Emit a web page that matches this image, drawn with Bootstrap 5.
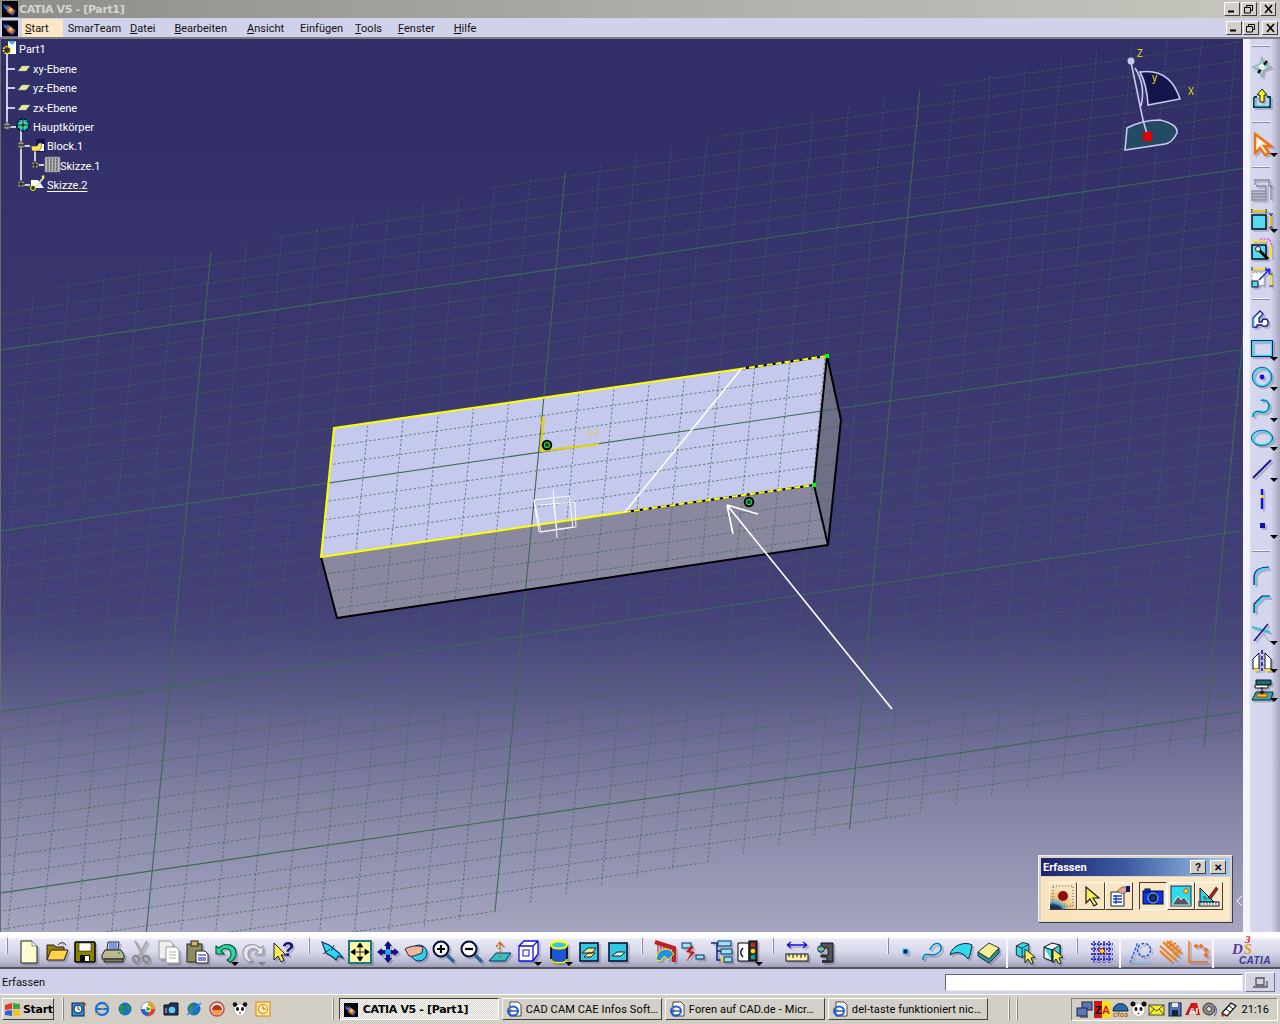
<!DOCTYPE html>
<html lang="de">
<head>
<meta charset="utf-8">
<title>CATIA V5 - [Part1]</title>
<link href="https://cdn.jsdelivr.net/npm/bootstrap@5.3.0/dist/css/bootstrap.min.css" rel="stylesheet">
<style>
html,body{margin:0;padding:0;width:1280px;height:1024px;overflow:hidden}
body{font:11px/1 Roboto,"Liberation Sans",sans-serif;color:#000;background:#d4d0c8}
svg{display:block;overflow:visible}
.app{width:1280px;height:1024px}
.wtitle{height:18px;background:linear-gradient(90deg,#8d8d8a,#b0b0aa 55%,#c6c6bf);padding:0 2px;color:#d6d6ce;font:bold 11px "DejaVu Sans",sans-serif}
.wtitle .ttxt{margin-left:1px;letter-spacing:-.35px}
.mbar{height:21px;background:#d0d2ea;border-bottom:2px solid #7e7e80;padding:1px 0 0 2px;color:#111}
.mstart{background:#fbe7c6;height:18px;padding:0 14px 0 3px;margin-left:4px;margin-right:5px}
.mg9{margin-right:9px}.mg12{margin-right:12px}.mg16{margin-right:16px}.mg19{margin-right:19px}.mg20{margin-right:20px}
.wbtns{margin-left:auto;margin-right:2px;gap:1px}
.wb{width:16px;height:14px;background:#d4d0c8;border:1px solid;border-color:#fff #404040 #404040 #fff;display:flex;align-items:center;justify-content:center}
.wb+.wb+.wb{margin-left:2px;width:16px}
.mainrow{height:893px}
.vp{width:1243px;height:893px;background:repeating-conic-gradient(rgba(0,0,50,.07) 0 25%,transparent 0 50%) 0 0/2px 2px,linear-gradient(180deg,#322f69 0,#3b3970 33%,#45437a 63%,#4b4a7d 67%,#5c5c89 73%,#72729a 79%,#8a8aa8 86%,#9a9ab8 93%,#acacc6 100%);overflow:hidden;border-left:1px solid #6a6a70}
.scene{position:absolute;left:-1px;top:0}
.treebox{position:absolute;left:-1px;top:0;width:120px;color:#fff}
.tr{height:19.5px;display:flex;align-items:center}
.trt{height:20.5px}.trs{height:18.5px}
.tr0{padding-left:19px}.tr1{padding-left:33px}.tr2{padding-left:47px}.tr3{padding-left:60px}
.tree-u{text-decoration:underline;text-underline-offset:2px}
.rbar{width:37px;background:linear-gradient(90deg,#f4f4fa 0,#f4f4fa 6px,#d4d6ee 8px,#d4d6ee 28px,#a4a4bc 37px)}
.rhand{height:2px;width:18px;margin-left:9px;background:#f4f4f8;border-bottom:1px solid #8c8c98}
.rs{display:flex;align-items:center;justify-content:flex-start;padding-left:7px;position:relative}
.h13{height:13px}.h14{height:14px}.h15{height:15px}.h16{height:16px}.h18{height:18px}.h20{height:20px}.h28{height:28px}.h29{height:29px}.h30{height:30px}.h31{height:31px}
.rs .drp{right:2px;bottom:2px}
.ic{width:24px;height:24px;filter:drop-shadow(2px 2px 0 rgba(80,80,110,.3))}
.bbar{height:37px;padding-left:15px;border-bottom:2px solid #55555e;background:linear-gradient(180deg,#fff 0,#fff 5px,#e6e6f4 8px,#d8d8ec 20px,#b4b4cc 31px,#9c9cb4 35px)}
.slot{width:28px;height:35px;display:flex;align-items:center;justify-content:center;position:relative;flex:none;padding-top:4px}
.s30{width:30px}
.drp{position:absolute;right:0;bottom:1px;width:0;height:0;border:4px solid transparent;border-top:4px solid #000;border-bottom:0}
.drpg{border-top-color:#80808c}
.hand{flex:none;height:35px;display:flex;justify-content:center}
.hand i{display:block;width:2px;height:16px;margin-top:6px;background:#f4f4f8;border-right:1px solid #8c8c98}
.h19{width:19px}.h20w{width:20px}.h7{width:7px}.sp2{width:2px;flex:none}.sp45{width:45px;flex:none}
.vsep{width:2px;height:31px;margin:5px 3px 0;background:#f6f6fb;flex:none}
.sbar{height:25px;background:#cfd0ea;padding:1px 0 0 2px;color:#111}
.sinput{width:298px;height:17px;margin-left:auto;background:#fff;border:1px solid;border-color:#66666e #eee #eee #66666e}
.sbtn{width:30px;height:20px;margin:0 5px 0 2px;background:#d4d4e4;border:1px solid;border-color:#fff #77778a #77778a #fff;display:flex;align-items:center;justify-content:center}
.tbar{height:30px;background:repeating-conic-gradient(rgba(120,110,90,.08) 0 25%,transparent 0 50%) 0 0/2px 2px,#d6d2ca;border-top:1px solid #fff;padding:3px 2px 0;color:#000}
.tstart{width:52px;height:22px;padding:0 0 0 1px;gap:2px;font:bold 11px "DejaVu Sans",sans-serif;letter-spacing:-.3px;background:#d4d0c8;border:1px solid;border-color:#fff #404040 #404040 #fff;border-radius:0;color:#000}
.tdiv{width:2px;height:22px;background:#f4f4f0;border-right:1px solid #85857f;flex:none}
.tdiv1{margin-left:8px;margin-right:1px}
.tdiv2{margin-left:57px}
.tdiv3{margin-left:20px}
.tdiv4{margin-left:6px}
.ql{width:16px;height:16px;flex:none}
.qlrow{height:22px;margin-left:2px}
.qls{width:23.1px;display:flex;justify-content:center;flex:none}
.tb{width:160px;height:22px;flex:none;padding:0 0 0 3px;gap:4px;background:#d4d0c8;border:1px solid;border-color:#fff #404040 #404040 #fff;border-radius:0;color:#000;white-space:nowrap;overflow:hidden;font:11px Roboto,sans-serif;letter-spacing:.12px;text-align:left;justify-content:flex-start;margin-left:3px}
.tb.on{border-color:#404040 #fff #fff #404040;background:repeating-conic-gradient(#fff 0 25%,#d4d0c8 0 50%) 0 0/2px 2px;font:bold 11px "DejaVu Sans",sans-serif;letter-spacing:-.35px;padding-top:1px;margin-left:5px}
.tray{width:207px;height:23px;margin-left:auto;margin-right:0;border:1px solid;border-color:#85857f #fff #fff #85857f;padding:0 0 0 4px;gap:1px}
.tri{width:17px;height:17px;flex:none}
.clock{margin-left:auto;margin-right:8px}
.erf{position:absolute;left:1037px;top:816px;width:195px;height:68px;background:#d8d4c8;border:1px solid;border-color:#f2f0e8 #404040 #404040 #f2f0e8;padding:2px}
.erft{height:18px;background:linear-gradient(90deg,#1e2270,#3d5ba0 45%,#a6caf0);color:#fff;font:bold 11px Roboto,sans-serif;padding-left:2px}
.erfb{width:16px;height:14px;background:#d4d0c8;border:1px solid;border-color:#fff #404040 #404040 #fff;color:#000;font:bold 10px "Liberation Sans",sans-serif;display:flex;align-items:center;justify-content:center;padding:0}
.erfbody{height:44px;background:linear-gradient(90deg,#fbe3bd,#fbe8c8);padding:5px 0 0 8px;margin-top:1px;position:relative}
.eb{width:28px;height:28px;flex:none;background:transparent;border:1px solid;border-color:#fff #404040 #404040 #fff;display:flex;align-items:center;justify-content:center;padding:0;border-radius:0}
.eb svg{width:22px;height:22px}
.eb.on{border-color:#404040 #fff #fff #404040;margin-left:6px}
.eb.rec{background:radial-gradient(circle at 12% 125%,#183050 26%,#5ac 32%,#f0c080 44%,#fbe3bd 70%)}
.chev{position:absolute;left:1235px;top:856px}
.hfirst{margin-left:-12px;margin-right:5px;width:7px}
.vsep0{margin:5px 0 0}
.ml2{margin-left:2px}
.drp3{right:3px}.drp1{right:1px}
</style>
</head>
<body>
<svg width="0" height="0" class="position-absolute">
<defs>
<radialGradient id="fg" cx=".55" cy=".55" r=".55"><stop offset="0" stop-color="#ffe9a0"/><stop offset=".35" stop-color="#e8742a"/><stop offset=".7" stop-color="#2a4fa8"/><stop offset="1" stop-color="#050510"/></radialGradient>
<symbol id="flare" viewBox="0 0 16 16"><rect width="16" height="16" fill="#04040c"/><path d="M2 1 14 10 11 15 5 11Z" fill="url(#fg)"/><path d="M1 3 8 8 3 8Z" fill="#3a7ad8"/></symbol>
<symbol id="iedoc" viewBox="0 0 16 16"><path d="M4 1h8l3 3v11H4z" fill="#fff" stroke="#444"/><ellipse cx="7" cy="10" rx="5" ry="4.600" fill="none" stroke="#1a5cd8" stroke-width="2"/><path d="M3 10h8" stroke="#1a5cd8" stroke-width="1.600"/><path d="M2 6 13 13" stroke="#e8a020" stroke-width=".8"/></symbol>
<symbol id="cube" viewBox="0 0 24 24"><path d="M4 7 12 3 19 5v12l-8 4-7-3z" fill="#35d8e8" stroke="#111"/><path d="M4 7l7 3v11M11 10l8-5" stroke="#111" fill="none"/></symbol>
</defs>
</svg>
<div class="app d-flex flex-column">
  <div class="wtitle d-flex align-items-center">
    <svg width="16" height="16"><use href="#flare"/></svg>
    <span class="ttxt">CATIA V5 - [Part1]</span>
    <div class="wbtns d-flex">
      <span class="wb"><svg width="8" height="8"><path d="M0 6.500h6" stroke="#000" stroke-width="2"/></svg></span>
      <span class="wb"><svg width="10" height="9"><path d="M2.500 2.500V.5h6v5h-2M.5 2.500h6v5.500h-6z" fill="none" stroke="#000"/></svg></span>
      <span class="wb"><svg width="9" height="8"><path d="M1 0 8 8M8 0 1 8" stroke="#000" stroke-width="1.600"/></svg></span>
    </div>
  </div>
  <div class="mbar d-flex align-items-center">
    <svg width="16" height="17"><use href="#flare"/></svg>
    <span class="mstart d-flex align-items-center"><span><u>S</u>tart</span></span>
    <span class="mg9">SmarTeam</span>
    <span class="mg19"><u>D</u>atei</span>
    <span class="mg20"><u>B</u>earbeiten</span>
    <span class="mg16"><u>A</u>nsicht</span>
    <span class="mg12">Einfügen</span>
    <span class="mg16"><u>T</u>ools</span>
    <span class="mg19"><u>F</u>enster</span>
    <span class="mg19"><u>H</u>ilfe</span>
    <div class="wbtns d-flex">
      <span class="wb"><svg width="8" height="8"><path d="M0 6.500h6" stroke="#000" stroke-width="2"/></svg></span>
      <span class="wb"><svg width="10" height="9"><path d="M2.500 2.500V.5h6v5h-2M.5 2.500h6v5.500h-6z" fill="none" stroke="#000"/></svg></span>
      <span class="wb"><svg width="9" height="8"><path d="M1 0 8 8M8 0 1 8" stroke="#000" stroke-width="1.600"/></svg></span>
    </div>
  </div>
  <div class="mainrow d-flex">
    <div class="vp position-relative">
      <svg class="scene" width="1244" height="893" viewBox="0 39 1244 893">
        <clipPath id="band"><path d="M-10 302 1300 4V724L-10 1029Z"/></clipPath>
        <path d="M334 428 827 356 814 485 321 557Z" fill="#c6c9ee"/>
        <path d="M321 557 814 485 828 545 337 618Z" fill="#89889f"/>
        <path d="M827 356 841 420 828 545 814 485Z" fill="#706f88"/>
        <g id="grid" clip-path="url(#band)" fill="none"></g>
        <g fill="none" stroke-width="2" stroke-linejoin="round">
          <path d="M321 557 337 618 828 545 841 420 827 356 814 485 828 545" stroke="#000"/>
          <path d="M740 369 827 356M625 512 814 485" stroke="#000"/>
          <path d="M740 369 827 356M625 512 814 485" stroke="#ff0" stroke-dasharray="6 3"/>
          <path d="M740 369 334 428 321 557 625 512" stroke="#ff0"/>
        </g>
        <rect x="825" y="354" width="4" height="4" fill="#0f0"/><rect x="812" y="483" width="4" height="4" fill="#0f0"/>
        <path d="M543 417 541 451 599 444" fill="none" stroke="#e3d400" stroke-width="2"/>
        <path d="M540 418 543 428 546 418M589 433h8M589 428v10M597 428v10" fill="none" stroke="#d9c860"/>
        <circle cx="547" cy="445" r="4.500" fill="#0a3a20" stroke="#000" stroke-width="1.500"/><circle cx="547" cy="445" r="2.500" fill="none" stroke="#2fd04a" stroke-width="1.200"/>
        <circle cx="749" cy="502" r="4.500" fill="#0a3a20" stroke="#000" stroke-width="1.500"/><circle cx="749" cy="502" r="2.500" fill="none" stroke="#2fd04a" stroke-width="1.200"/>
        <g fill="none" stroke="#fff" stroke-width=".9"><path d="M534 500 569 496 573 527 539 532ZM540 505 575 502 576 527 541 532 534 500M553 489 557 538M553 500 557 530"/></g>
        <path d="M742 368 625 512" stroke="#fff" stroke-width="1.600"/>
        <path d="M892 709 727 505M727 505 733 534M727 505 758 514" stroke="#fff" stroke-width="1.700" fill="none"/>
        <g>
          <path d="M1140 72Q1170 68 1180 99L1148 105Q1147 85 1140 72Z" fill="#15154e" stroke="#c9c9ee" stroke-width="1.600"/>
          <path d="M1125 150 1127 128Q1142 120 1160 120 1178 124 1177 133 1172 143 1165 144Z" fill="#244a64" stroke="#c9c9ee" stroke-width="1.600"/>
          <path d="M1131 62 1143 120M1135 68Q1146 85 1141 106M1143 120 1147 134" stroke="#c9c9ee" stroke-width="1.600" fill="none"/>
          <circle cx="1131" cy="61" r="3.500" fill="#c9c9ee"/>
          <rect x="1143" y="132" width="9" height="9" fill="#e00000"/>
          <g fill="#e8e000" font-size="10" font-family="Noto Sans,sans-serif"><text x="1137" y="57">Z</text><text x="1152" y="81">y</text><text x="1188" y="95">X</text></g>
        </g>
      </svg>
      <div class="treebox">
        <svg class="position-absolute top-0 start-0" width="90" height="160" viewBox="0 39 90 160">
          <g stroke="#fff" stroke-width="1.500" fill="none">
            <path d="M7 52V127M7 69H15M7 88H15M7 108H15M7 127H16M21 130V185M21 146H30M21 185H30M35 150V165M35 165H44"/>
          </g>
          <g fill="#999" stroke="#222" stroke-width=".6"><circle cx="7" cy="126" r="3.500"/><circle cx="21" cy="145" r="3.500"/><circle cx="35" cy="165" r="3.500"/><circle cx="21" cy="184" r="3.500"/></g>
          <path d="M4 126h6M18 145h6M32 165h6M35 162v6M18 184h6M21 181v6" stroke="#000"/>
          <path d="M8 41h8v13H8z" fill="#fff"/><path d="M8 41h8l-4 4z" fill="#3ab0d8"/>
          <circle cx="7" cy="50" r="3.600" fill="#333" stroke="#ff0" stroke-width="1.500" stroke-dasharray="2 1"/>
          <path d="M18 71 22 66H30L26 71Z" fill="#f5e58a" stroke="#4cc" stroke-width=".4"/><path d="M18 90 22 85H30L26 90Z" fill="#f5e58a" stroke="#4cc" stroke-width=".4"/><path d="M18 110 22 105H30L26 110Z" fill="#f5e58a" stroke="#4cc" stroke-width=".4"/>
          <circle cx="23" cy="125" r="6" fill="#16c6d8" stroke="#012" stroke-width="1.500" stroke-dasharray="3 1"/><circle cx="23" cy="125" r="2.500" fill="#1a8a30" stroke="#ff0" stroke-width=".7"/><path d="M16 125H30M23 118V132" stroke="#05254a" stroke-width=".8"/>
          <path d="M36 139h9v13H36z" fill="#16125a"/><path d="M38 144h6v7h-7z" fill="#fff"/><path d="M31 146h6l2-3h3l-1 5-2 3h-7z" fill="#ffe24a" stroke="#222" stroke-width=".5"/>
          <rect x="45" y="157" width="15" height="15" fill="#bbb" stroke="#777" stroke-dasharray="2 1"/><path d="M47 160h11M47 163h11M47 166h11M47 169h11M48 158v13M51 158v13M54 158v13M57 158v13" stroke="#444" stroke-dasharray="1.500 1.500"/>
          <path d="M31 188V180H38L44 188Z" fill="#fff"/><path d="M36 187 44 177" stroke="#ddd" stroke-width="2"/><path d="M42 177l2-1" stroke="#ff0" stroke-width="2"/><circle cx="33" cy="188" r="2.500" fill="#333" stroke="#ff0"/>
        </svg>
        <div class="tr trt tr0 position-relative">Part1</div>
        <div class="tr tr1 position-relative">xy-Ebene</div>
        <div class="tr tr1 position-relative">yz-Ebene</div>
        <div class="tr tr1 position-relative">zx-Ebene</div>
        <div class="tr trs tr1 position-relative">Hauptkörper</div>
        <div class="tr trt tr2 position-relative">Block.1</div>
        <div class="tr trs tr3 position-relative">Skizze.1</div>
        <div class="tr tr2 position-relative"><span class="tree-u">Skizze.2</span></div>
      </div>
      <div class="erf">
        <div class="erft d-flex align-items-center"><span>Erfassen</span>
          <span class="erfb ms-auto me-1">?</span><span class="erfb me-1">✕</span>
        </div>
        <div class="erfbody d-flex">
          <span class="eb rec"><svg viewBox="0 0 22 22"><rect x="1" y="1" width="20" height="20" fill="none" stroke="#556" stroke-dasharray="1 2"/><circle cx="11" cy="11" r="5" fill="#8c0a10"/></svg></span>
          <span class="eb"><svg viewBox="0 0 22 22"><path d="M6 2v16l4-4 4 7 3-2-4-6h6z" fill="#ffec50" stroke="#123" stroke-width="1.200"/></svg></span>
          <span class="eb"><svg viewBox="0 0 22 22"><path d="M3 7h13v14H3z" fill="#fff" stroke="#124"/><path d="M5 11h9M5 14h9M5 17h9M8 10v9" stroke="#1a3ad0" stroke-width="1.300"/><path d="M9 6 14 2h5l1 4-6 3z" fill="#d8a890" stroke="#433" stroke-width=".6"/><rect x="18" y="1" width="4" height="6" fill="#12127a"/></svg></span>
          <span class="eb on"><svg viewBox="0 0 22 22"><rect x="1" y="6" width="20" height="13" fill="#1030f0" stroke="#012"/><rect x="3" y="4" width="5" height="3" fill="#1030f0" stroke="#012"/><circle cx="11" cy="13" r="5" fill="#123" stroke="#7ce" /><circle cx="11" cy="13" r="2" fill="#13a"/></svg></span>
          <span class="eb"><svg viewBox="0 0 22 22"><rect x="1" y="1" width="20" height="20" fill="#2fdcec" stroke="#134"/><path d="M2 20 8 11l3 4 3-3 6 8z" fill="#556" stroke="#fff" stroke-width=".8"/><circle cx="16" cy="6" r="2.300" fill="#ffd800" stroke="#c33" stroke-width=".8"/></svg></span>
          <span class="eb"><svg viewBox="0 0 22 22"><path d="M2 3V17H16Z" fill="#30d8e0" stroke="#012"/><path d="M6 11v3h3z" fill="#fbe8c8" stroke="#012" stroke-width=".7"/><rect x="1" y="17" width="20" height="4" fill="#fff" stroke="#012"/><path d="M3 17v3M6 17v3M9 17v3M12 17v3M15 17v3M18 17v3" stroke="#012" stroke-width=".7"/><path d="M10 13 18 2l2 2-7 10z" fill="#b02020" stroke="#012" stroke-width=".6"/></svg></span>
        </div>
      </div>
      <svg class="chev" width="8" height="12"><path d="M6 1 1 6l5 5" fill="none" stroke="#fff"/></svg>
    </div>
    <div class="rbar d-flex flex-column">
      <div class="h14 d-flex align-items-center"><div class="rhand"></div></div>
      <div class="rs h30"><svg class="ic" viewBox="0 0 24 24"><path d="M12 1 14 8 22 11 14 14 12 22 10 14 2 11 10 8Z" fill="#8fdcc8" stroke="#889" stroke-width=".6"/><path d="M17 5 8 17" stroke="#111" stroke-width="2.500"/><circle cx="12" cy="11" r="3" fill="#eee"/></svg></div>
      <div class="rs h30"><svg class="ic" viewBox="0 0 24 24"><path d="M4 11h3M17 11h3v10H4V11" fill="none" stroke="#0a3a50" stroke-width="2"/><path d="M5 12V20H19V12" fill="none" stroke="#30d8e0"/><path d="M12 3 7 9h3v7h4V9h3z" fill="#ffff20" stroke="#123"/></svg></div>
      <div class="h18 d-flex align-items-center"><div class="rhand"></div></div>
      <div class="rs h28"><svg class="ic" viewBox="0 0 24 24"><path d="M5 1v19l5-5 5 7 4-2-5-7h7z" fill="#fff0e0" stroke="#f07010" stroke-width="2.400"/></svg><i class="drp"></i></div>
      <div class="h16 d-flex align-items-center"><div class="rhand"></div></div>
      <div class="rs h30"><svg class="ic" viewBox="0 0 24 24"><path d="M5 2h14M5 1v6M19 1v6M21 8v14M18 8h5M2 13h14v9H2zM2 16h14M2 19h14M6 8h10v5" fill="none" stroke="#8a8a95" stroke-width="1.300"/></svg></div>
      <div class="rs h30"><svg class="ic" viewBox="0 0 24 24"><path d="M2 3h14M2 1v4M16 1v4M21 6v14M19 6h4M19 20h4" fill="none" stroke="#223" stroke-width="1.200"/><path d="M2 3h14M21 8v10" stroke="#ffe000" stroke-width="1.500"/><rect x="2" y="7" width="14" height="14" fill="#5ad8ec" stroke="#012" stroke-width="1.500"/></svg><i class="drp"></i></div>
      <div class="rs h29"><svg class="ic" viewBox="0 0 24 24"><path d="M2 3h14M21 6v14" stroke="#ffe000" stroke-width="1.500"/><path d="M10 1h10l2 8" fill="none" stroke="#f020d0" stroke-dasharray="2 1.500"/><rect x="2" y="7" width="14" height="14" fill="#5ad8ec" stroke="#012" stroke-width="1.500"/><path d="M8 11 18 21" stroke="#000" stroke-width="3"/><circle cx="8" cy="11" r="2.500" fill="#eee" stroke="#222"/></svg></div>
      <div class="rs h28"><svg class="ic" viewBox="0 0 24 24"><path d="M2 3h14M21 8v12" stroke="#ffe000" stroke-width="1.500"/><path d="M2 1v4M16 1v4M19 8h4M19 20h4" stroke="#334"/><path d="M2 7h12v12H2z" fill="#fff" stroke="#aaa" stroke-dasharray="2 2"/><rect x="2" y="15" width="6" height="6" fill="#5ad8ec" stroke="#012"/><path d="M9 14 20 3M20 3l-5 1M20 3l-1 5" stroke="#1a22e0" stroke-width="1.500" fill="none"/></svg></div>
      <div class="h13 d-flex align-items-center"><div class="rhand"></div></div>
      <div class="rs h29"><svg class="ic" viewBox="0 0 24 24"><path d="M3 19V10L10 3l3 3-4 4v4h3c0-4 6-4 6 0v2c-1 3-5 3-6 1H7v2z" fill="#fff" stroke="#1a1a80" stroke-width="1.300"/><path d="M4 19V10.500L10 4.500" fill="none" stroke="#30e0f0"/></svg></div>
      <div class="rs h29"><svg class="ic" viewBox="0 0 24 24"><rect x="2" y="4" width="20" height="15" fill="none" stroke="#30e0f0" stroke-width="2.400"/><rect x="1.500" y="3.500" width="21" height="16" fill="none" stroke="#1a1a70"/></svg><i class="drp"></i></div>
      <div class="rs h30"><svg class="ic" viewBox="0 0 24 24"><circle cx="12" cy="11" r="9" fill="none" stroke="#30e0f0" stroke-width="2.200"/><circle cx="12" cy="11" r="9.800" fill="none" stroke="#1a1a70" stroke-width=".7"/><circle cx="12" cy="11" r="2.400" fill="#1010e0"/></svg><i class="drp"></i></div>
      <div class="rs h31"><svg class="ic" viewBox="0 0 24 24"><path d="M3 20c0-6 5-6 8-5s8 0 8-6-7-7-8-5" fill="none" stroke="#30e0f0" stroke-width="2.400"/><path d="M3 20c0-6 5-6 8-5s8 0 8-6-7-7-8-5" fill="none" stroke="#1a1a70" stroke-width=".8"/></svg><i class="drp"></i></div>
      <div class="rs h29"><svg class="ic" viewBox="0 0 24 24"><ellipse cx="12" cy="11" rx="10" ry="7" fill="none" stroke="#30e0f0" stroke-width="2.200"/><ellipse cx="12" cy="11" rx="10.600" ry="7.800" fill="none" stroke="#1a1a70" stroke-width=".7"/></svg><i class="drp"></i></div>
      <div class="rs h31"><svg class="ic" viewBox="0 0 24 24"><path d="M3 21 21 3" stroke="#1a1a80" stroke-width="2"/></svg><i class="drp"></i></div>
      <div class="rs h29"><svg class="ic" viewBox="0 0 24 24"><path d="M12 2V8M12 11V22" stroke="#1010e0" stroke-width="2.400"/><path d="M11 8.500h2.500V11H11z" fill="#ffe000"/></svg></div>
      <div class="rs h28"><svg class="ic" viewBox="0 0 24 24"><rect x="10" y="8" width="5" height="5" fill="#1010a0"/></svg><i class="drp"></i></div>
      <div class="h20 d-flex align-items-center"><div class="rhand"></div></div>
      <div class="rs h29"><svg class="ic" viewBox="0 0 24 24"><path d="M5 21V13C5 6 12 4 19 4" fill="none" stroke="#30e0f0" stroke-width="2"/><path d="M4 21V13C4 5 12 3 19 3" fill="none" stroke="#1a1a70" stroke-width="1.200"/></svg></div>
      <div class="rs h28"><svg class="ic" viewBox="0 0 24 24"><path d="M5 21V13L13 5H20" fill="none" stroke="#30e0f0" stroke-width="2"/><path d="M4 21V12L12 4H20" fill="none" stroke="#1a1a70" stroke-width="1.200"/></svg></div>
      <div class="rs h29"><svg class="ic" viewBox="0 0 24 24"><path d="M2 6 20 11" stroke="#30c0e0" stroke-width="2"/><path d="M18 3 4 20" stroke="#1a1a80" stroke-width="1.600"/><path d="M14 14 21 22" stroke="#888" stroke-dasharray="2 1.500"/></svg><i class="drp"></i></div>
      <div class="rs h28"><svg class="ic" viewBox="0 0 24 24"><path d="M3 20V10L9 4V20ZM21 20V10L15 4V20Z" fill="#fff" stroke="#111"/><path d="M4 21H9M15 21h6" stroke="#ffe000" stroke-width="2"/><path d="M12 1V22" stroke="#1010d0" stroke-width="1.600" stroke-dasharray="4 2"/></svg><i class="drp"></i></div>
      <div class="rs h29"><svg class="ic" viewBox="0 0 24 24"><path d="M6 2h15v5H6z" fill="#1d6a78" stroke="#111"/><path d="M5 7h13v3H5z" fill="#fff" stroke="#111"/><path d="M5 16 2 22H21L23 14H6z" fill="#27b0a8" stroke="#123"/><path d="M7 16h10v3H7z" fill="#ffe000" stroke="#d22"/><path d="M12 9v7M10 13l2 3 2-3" stroke="#000" fill="none"/></svg><i class="drp"></i></div>
    </div>
  </div>
  <div class="bbar d-flex">
    <div class="hand hfirst"><i></i></div>
    <div class="slot"><svg class="ic" viewBox="0 0 24 24"><path d="M4 1h11l5 5v17H4z" fill="#fffbd0" stroke="#222"/><path d="M15 1v5h5" fill="#fff" stroke="#888"/></svg></div>
    <div class="slot"><svg class="ic" viewBox="0 0 24 24"><path d="M2 20V5h7l2 2h8v3" fill="#a08000" stroke="#222"/><path d="M2 20 6 10H23L19 20Z" fill="#ffd24a" stroke="#222"/><path d="M13 5c2-3 6-3 8 0" stroke="#222" fill="none"/></svg></div>
    <div class="slot"><svg class="ic" viewBox="0 0 24 24"><rect x="2" y="2" width="20" height="20" rx="1" fill="#8c8400" stroke="#000" stroke-width="1.500"/><rect x="6" y="3" width="12" height="8" fill="#fff" stroke="#000" stroke-width=".5"/><rect x="7" y="15" width="10" height="7" fill="#111"/><rect x="12" y="16" width="4" height="5" fill="#fff"/></svg></div>
    <div class="slot"><svg class="ic" viewBox="0 0 24 24"><path d="M7 2h11l-1 8H6z" fill="#d8e8ff" stroke="#222"/><path d="M8 4h8M8 6h8M8 8h8" stroke="#2040c0"/><path d="M4 10H20L23 15v4H1v-4Z" fill="#b8b890" stroke="#222"/><path d="M3 19h19v3H3z" fill="#807858" stroke="#222"/><circle cx="18" cy="13" r="1" fill="#0c0"/></svg></div>
    <div class="slot"><svg class="ic" viewBox="0 0 24 24"><path d="M6 1 14 16M18 1 10 16" stroke="#a8a8a8" stroke-width="2.400"/><circle cx="7" cy="19" r="3.200" fill="none" stroke="#888" stroke-width="2"/><circle cx="17" cy="19" r="3.200" fill="none" stroke="#888" stroke-width="2"/></svg></div>
    <div class="slot"><svg class="ic" viewBox="0 0 24 24"><path d="M2 1h11l3 3v15H2z" fill="#eee" stroke="#999"/><path d="M9 7h10l3 3v13H9z" fill="#fff" stroke="#999"/><path d="M12 12h7M12 15h7M12 18h7" stroke="#aaa"/></svg></div>
    <div class="slot"><svg class="ic" viewBox="0 0 24 24"><rect x="2" y="4" width="15" height="18" fill="#8c8c60" stroke="#222"/><rect x="6" y="1" width="7" height="5" fill="#d8b060" stroke="#222"/><path d="M11 11h9l3 3v9H11z" fill="#fff" stroke="#222"/><path d="M13 15h8M13 18h8M13 20h8" stroke="#1010c0"/></svg></div>
    <div class="slot"><svg class="ic" viewBox="0 0 24 24"><path d="M3 6 3 14 11 14 8 11C11 7 18 8 18 14c0 3-2 5-4 6l3 2c4-2 6-5 6-9 0-9-11-11-17-5z" fill="#30d8a0" stroke="#053" stroke-width="1.100"/></svg><i class="drp"></i></div>
    <div class="slot s30"><svg class="ic" viewBox="0 0 24 24"><path d="M21 6V14H13L16 11C13 7 6 8 6 14c0 3 2 5 4 6l-3 2C3 20 1 17 1 13 1 4 12 2 18 8z" fill="#e4e4ee" stroke="#999" stroke-width="1.100"/></svg><i class="drp drpg drp3"></i></div>
    <div class="slot s30"><svg class="ic" viewBox="0 0 24 24"><path d="M2 3V20L6 16 9 22 12 20 9 15H14Z" fill="#ffec50" stroke="#123"/><text x="10" y="16" font-family="Liberation Sans,sans-serif" font-weight="700" font-size="20" fill="#101070">?</text></svg></div>
    <div class="hand h19"><i></i></div>
    <div class="slot"><svg class="ic" viewBox="0 0 24 24"><path d="M2 2 9 5 19 13 23 18 18 16 16 20 13 17 6 13 3 5Z" fill="#30d8ec" stroke="#036" stroke-width="1.100"/><path d="M3 14 10 9M14 5 11 11" stroke="#036"/></svg></div>
    <div class="slot"><svg class="ic" viewBox="0 0 24 24"><rect x="1" y="1" width="22" height="22" fill="#fff8a0" stroke="#1a7a80" stroke-width="2"/><path d="M12 3V21M3 12H21M12 3 9 7h6zM12 21 9 17h6zM3 12 7 9v6zM21 12 17 9v6z" fill="#000" stroke="#000" stroke-width=".8"/></svg></div>
    <div class="slot"><svg class="ic" viewBox="0 0 24 24"><path d="M12 1 16 6H14V10H18V8L23 12 18 16V14H14V18H16L12 23 8 18H10V14H6V16L1 12 6 8V10H10V6H8Z" fill="#101080"/><circle cx="12" cy="12" r="3" fill="#30a0f0"/></svg></div>
    <div class="slot"><svg class="ic" viewBox="0 0 24 24"><circle cx="15" cy="13" r="8" fill="#30d0f0" stroke="#036"/><path d="M1 9c5-3 12-4 18-2l-1 6c-5 2-10 4-13 3z" fill="#e8b8a0" stroke="#422"/></svg></div>
    <div class="slot"><svg class="ic" viewBox="0 0 24 24"><path d="M15 15 22 22" stroke="#2a6a90" stroke-width="3.400"/><circle cx="9" cy="9" r="7.500" fill="#fff" stroke="#013" stroke-width="2"/><path d="M5 9H13M9 5V13" stroke="#000" stroke-width="2.200"/></svg></div>
    <div class="slot"><svg class="ic" viewBox="0 0 24 24"><path d="M15 15 22 22" stroke="#2a6a90" stroke-width="3.400"/><circle cx="9" cy="9" r="7.500" fill="#fff" stroke="#013" stroke-width="2"/><path d="M5 9H13" stroke="#000" stroke-width="2.200"/></svg></div>
    <div class="slot"><svg class="ic" viewBox="0 0 24 24"><path d="M1 21 8 13H23L17 21Z" fill="#30c0c8" stroke="#036"/><path d="M12 18V3M8 7l4-5 4 5" stroke="#d06000" stroke-width="1.400" fill="none" stroke-dasharray="3 1"/></svg></div>
    <div class="slot"><svg class="ic" viewBox="0 0 24 24"><path d="M3 6H17V21H3ZM3 6 8 1H22V14L17 21M17 6 22 1" fill="#fff" stroke="#1010e0" stroke-width="1.300"/><rect x="7" y="10" width="6" height="6" fill="none" stroke="#1010e0"/></svg><i class="drp"></i></div>
    <div class="sp2"></div>
    <div class="slot s30"><svg class="ic" viewBox="0 0 24 24"><path d="M4 5V19C4 24 20 24 20 19V5" fill="#1a58d8" stroke="#000" stroke-width="1.600"/><ellipse cx="12" cy="5" rx="8" ry="3.600" fill="#30c8e0" stroke="#ff0" stroke-width="2"/><path d="M4 19C4 24 20 24 20 19" fill="none" stroke="#ff0" stroke-width="1.500"/></svg><i class="drp drp1"></i></div>
    <div class="slot s30"><svg class="ic" viewBox="0 0 24 24"><rect x="3" y="3" width="18" height="18" fill="#30c8e0" stroke="#113" stroke-width="1.600"/><path d="M5 13 11 8H19L15 13ZM7 17 11 13H18L14 17Z" fill="#f4e890" stroke="#222"/></svg></div>
    <div class="slot"><svg class="ic" viewBox="0 0 24 24"><rect x="3" y="3" width="18" height="18" fill="#30c8e0" stroke="#113" stroke-width="1.600"/><path d="M6 16 11 12H19L15 16Z" fill="#e8f0f0" stroke="#222"/></svg></div>
    <div class="hand h19"><i></i></div>
    <div class="slot"><svg class="ic" viewBox="0 0 24 24"><path d="M2 2 21 8V22" fill="none" stroke="#c02020" stroke-width="4"/><path d="M5 3V15M8 4V12M11 5V10M14 6V10M17 7V12M20 8V20" stroke="#c02020"/><path d="M3 20C4 8 16 6 21 14L15 20C13 15 9 16 8 21Z" fill="#2090e0" stroke="#ff0"/></svg></div>
    <div class="slot"><svg class="ic" viewBox="0 0 24 24"><rect x="1" y="3" width="9" height="5" fill="#9ae0f0" stroke="#036"/><rect x="15" y="15" width="8" height="4" fill="#9ae0f0" stroke="#036"/><path d="M10 6 5 12 10 13 5 22 14 12 9 11 13 7Z" fill="#c01818"/></svg></div>
    <div class="slot"><svg class="ic" viewBox="0 0 24 24"><path d="M2 3H8V20H14M8 11H13" fill="none" stroke="#102080" stroke-width="1.500"/><path d="M11 20 15 17V23Z" fill="#ffe000"/><rect x="9" y="1" width="13" height="5" fill="#9ae0f0" stroke="#036"/><rect x="12" y="9" width="11" height="5" fill="#9ae0f0" stroke="#036"/><rect x="15" y="17" width="8" height="5" fill="#9ae0f0" stroke="#036"/></svg></div>
    <div class="slot"><svg class="ic" viewBox="0 0 24 24"><path d="M1 3H12V21H1Z" fill="#fff" stroke="#000"/><path d="M6 8C3 11 3 14 6 17" fill="none" stroke="#000" stroke-width="1.400"/><rect x="12" y="1" width="8" height="20" fill="#333" stroke="#000"/><circle cx="16" cy="5" r="2.300" fill="#d02020"/><circle cx="16" cy="11" r="2.300" fill="#ffe000"/><circle cx="16" cy="17" r="2.300" fill="#10a090"/></svg><i class="drp"></i></div>
    <div class="hand h20w"><i></i></div>
    <div class="slot"><svg class="ic" viewBox="0 0 24 24"><path d="M2 5H22M2 5 6 2M2 5 6 8M22 5 18 2M22 5 18 8" stroke="#1010d0" stroke-width="1.300" fill="none"/><rect x="1" y="14" width="22" height="7" fill="#fff0a0" stroke="#113"/><path d="M4 14v3M8 14v4M12 14v3M16 14v4M20 14v3" stroke="#113"/></svg></div>
    <div class="slot"><svg class="ic" viewBox="0 0 24 24"><path d="M8 3H20V22H14V17H8V15H15V8H8Z" fill="#555" stroke="#111"/><rect x="9" y="20" width="9" height="3" fill="#333"/><circle cx="8" cy="9" r="3.300" fill="#30a0e0" stroke="#222"/><path d="M5 9h6" stroke="#ffe000"/></svg></div>
    <div class="sp45"></div>
    <div class="hand h7"><i></i></div>
    <div class="slot"><svg class="ic" viewBox="0 0 24 24"><rect x="10" y="9" width="5" height="5" fill="#10106a" stroke="#30e0f0"/></svg></div>
    <div class="slot"><svg class="ic" viewBox="0 0 24 24"><path d="M2 20C2 12 8 15 11 15S21 13 20 7 11 3 9 10" fill="none" stroke="#30e0f0" stroke-width="2"/><path d="M2 20C2 12 8 15 11 15S21 13 20 7 11 3 9 10" fill="none" stroke="#1a1a80" stroke-width=".8"/></svg></div>
    <div class="slot"><svg class="ic" viewBox="0 0 24 24"><path d="M1 15C3 5 16 1 23 5 22 11 21 16 19 19 14 12 7 11 1 15Z" fill="#30d8f0" stroke="#123"/></svg></div>
    <div class="slot"><svg class="ic" viewBox="0 0 24 24"><path d="M1 12 12 3 22 8 12 19Z" fill="#f8f090" stroke="#234"/><path d="M22 8V13L12 23 1 16V12L12 19Z" fill="#2a9a90" stroke="#234"/><path d="M6 12h.1M12 9h.1M14 13h.1" stroke="#333" stroke-width="1.500"/></svg></div>
    <div class="vsep"></div>
    <div class="slot"><svg class="ic" viewBox="0 0 24 24"><use href="#cube" width="20" height="20"/><path d="M12 9V23L15 19 18 24 20 23 18 18 22 17Z" fill="#ffec50" stroke="#123"/></svg></div>
    <div class="slot"><svg class="ic" viewBox="0 0 24 24"><path d="M3 7 11 3 19 5V17L11 21 3 18Z" fill="#f0f0f4" stroke="#111"/><path d="M3 7 11 10V21M11 10 19 5V17L11 21Z" fill="#35d8e8" stroke="#111"/><path d="M12 9V23L15 19 18 24 20 23 18 18 22 17Z" fill="#ffec50" stroke="#123"/></svg></div>
    <div class="hand h19"><i></i></div>
    <div class="sp2"></div>
    <div class="slot"><svg class="ic" viewBox="0 0 24 24"><path d="M1 4H23M1 9H23M1 14H23M1 19H23M4 1V23M9 1V23M14 1V23M19 1V23" stroke="#1010c8" stroke-dasharray="2 1" stroke-width="1.300"/><path d="M12 8 15 11 12 14 9 11Z" fill="#ffd800" stroke="#d02020"/></svg></div>
    <div class="vsep"></div>
    <div class="slot ml2"><svg class="ic" viewBox="0 0 24 24"><circle cx="16" cy="10" r="6.500" fill="none" stroke="#1a58d8" stroke-width="1.400" stroke-dasharray="3 1.500"/><path d="M2 23 10 2" stroke="#1a58d8" stroke-width="1.400" stroke-dasharray="3 1.500"/><path d="M2 22H22" stroke="#30e0f0" stroke-dasharray="3 1.500"/></svg></div>
    <div class="slot ml2"><svg class="ic" viewBox="0 0 24 24"><path d="M2 6 18 20M5 2 21 17M9 1 23 13M2 11 14 22M7 5 14 1M9 8 18 3M13 11 21 6M16 15 23 10" stroke="#f08010" stroke-width="2" fill="none"/></svg></div>
    <div class="slot"><svg class="ic" viewBox="0 0 24 24"><path d="M3 1V22H22M8 6H17M8 6 11 4M8 6 11 8M17 6 14 4M17 6 14 8M20 8V17M20 8 18 11M20 8 22 11M20 17 18 14M20 17 22 14" stroke="#f07010" stroke-width="1.400" fill="none"/></svg></div>
    <div class="vsep vsep0"></div>
    <svg class="ms-auto me-2" width="46" height="35" viewBox="0 0 46 35"><text x="19" y="11" font-family="Liberation Serif,serif" font-style="italic" font-weight="700" font-size="11" fill="#d82020">3</text><text x="6" y="22" font-family="Liberation Serif,serif" font-style="italic" font-weight="700" font-size="15" fill="#5a3a98" letter-spacing="1">D<tspan fill="#e0a020">S</tspan></text><text x="13" y="32" font-family="Liberation Sans,sans-serif" font-style="italic" font-weight="700" font-size="10" fill="#3a3a90" letter-spacing=".4">CATIA</text></svg>
  </div>
  <div class="sbar d-flex align-items-center">
    <span>Erfassen</span>
    <div class="sinput"></div>
    <div class="sbtn"><svg width="16" height="13"><path d="M4 2h8v7H4zM1 11H15V5" fill="none" stroke="#555" stroke-width="1.300"/></svg></div>
  </div>
  <div class="tbar d-flex">
    <button class="btn tstart d-flex align-items-center"><svg width="17" height="15" viewBox="0 0 17 15"><path d="M1 3 8 1V7L1 8Z" fill="#e23a20"/><path d="M9 1 16 2V7L9 7Z" fill="#3ca83a"/><path d="M1 9 8 8V14L1 13Z" fill="#2a62d0"/><path d="M9 8 16 8V14L9 14Z" fill="#f4c020"/></svg><span>Start</span></button>
    <div class="tdiv tdiv1"></div>
    <div class="qlrow d-flex align-items-center">
      <div class="qls"><svg class="ql" viewBox="0 0 16 16"><rect x="1" y="2" width="12" height="13" fill="#2a8ad8" stroke="#124"/><circle cx="7" cy="8" r="4" fill="#fff" stroke="#135"/><path d="M7 5V8L9 9" stroke="#135" fill="none"/><path d="M12 1 15 4" stroke="#e04020" stroke-width="1.500"/></svg></div>
      <div class="qls"><svg class="ql" viewBox="0 0 16 16"><ellipse cx="8" cy="8" rx="6" ry="6" fill="none" stroke="#1a70e0" stroke-width="2.400"/><path d="M2 8H13" stroke="#1a70e0" stroke-width="2"/><path d="M1 14C4 12 12 5 15 1" stroke="#e8b030" fill="none"/></svg></div>
      <div class="qls"><svg class="ql" viewBox="0 0 16 16"><circle cx="8" cy="8" r="6.500" fill="#1a70c0"/><path d="M4 4C7 3 8 6 6 8S9 11 7 13C4 12 2 8 4 4ZM10 4 13 6 12 9 9 7Z" fill="#2a9a30"/></svg></div>
      <div class="qls"><svg class="ql" viewBox="0 0 16 16"><circle cx="8" cy="8" r="7" fill="#fff" stroke="#999"/><path d="M8 1A7 7 0 0 1 15 8H11A3 3 0 0 0 8 5Z" fill="#e8a020"/><path d="M15 8A7 7 0 0 1 8 15V11A3 3 0 0 0 11 8Z" fill="#e04030"/><path d="M8 15A7 7 0 0 1 1 8H5A3 3 0 0 0 8 11Z" fill="#2060d0"/><path d="M6.500 5.500 11 8 6.500 10.500Z" fill="#2a9a30"/></svg></div>
      <div class="qls"><svg class="ql" viewBox="0 0 16 16"><path d="M1 4H6L7 2H15V14H1Z" fill="#223060" stroke="#111"/><circle cx="9" cy="9" r="3.300" fill="#60d0e0"/><path d="M3 7V12" stroke="#c0c0d8"/></svg></div>
      <div class="qls"><svg class="ql" viewBox="0 0 16 16"><circle cx="8" cy="8" r="6.500" fill="#1a70c0"/><path d="M4 4C7 3 8 6 6 8S9 11 7 13C4 12 2 8 4 4Z" fill="#2a9a30"/><path d="M1 14 15 2" stroke="#3a80e0" stroke-width="1.500"/></svg></div>
      <div class="qls"><svg class="ql" viewBox="0 0 16 16"><circle cx="8" cy="8" r="7" fill="#e8e8e8" stroke="#c84040" stroke-width="1.400"/><path d="M3 9A5 5 0 0 1 13 9Z" fill="#c03010"/><path d="M3 9H13A5 5 0 0 1 3 9" fill="#e8a040"/></svg></div>
      <div class="qls"><svg class="ql" viewBox="0 0 16 16"><circle cx="8" cy="9" r="6" fill="#fff" stroke="#bbb"/><circle cx="3" cy="3.500" r="2.300" fill="#111"/><circle cx="13" cy="3.500" r="2.300" fill="#111"/><ellipse cx="5.500" cy="8" rx="1.500" ry="2" fill="#111"/><ellipse cx="10.500" cy="8" rx="1.500" ry="2" fill="#111"/><path d="M7 12h2" stroke="#d03020" stroke-width="1.500"/></svg></div>
      <div class="qls"><svg class="ql" viewBox="0 0 16 16"><rect x="1" y="1" width="14" height="14" fill="#fdf0b0" stroke="#e89020" stroke-width="1.300"/><circle cx="8" cy="8" r="4.600" fill="none" stroke="#e89020" stroke-width="1.200"/><path d="M8 5V8H11" stroke="#c06010" fill="none"/></svg></div>
    </div>
    <div class="tdiv tdiv2"></div>
    <button class="btn tb on d-flex align-items-center"><svg width="16" height="14" class="flex-none"><use href="#flare"/></svg><span>CATIA V5 - [Part1]</span></button>
    <button class="btn tb d-flex align-items-center"><svg width="16" height="16"><use href="#iedoc"/></svg><span>CAD CAM CAE Infos Soft…</span></button>
    <button class="btn tb d-flex align-items-center"><svg width="16" height="16"><use href="#iedoc"/></svg><span>Foren auf CAD.de - Micr…</span></button>
    <button class="btn tb d-flex align-items-center"><svg width="16" height="16"><use href="#iedoc"/></svg><span>del-taste funktioniert nic…</span></button>
    <div class="tdiv tdiv3"></div>
    <div class="tdiv tdiv4"></div>
    <div class="tray d-flex align-items-center">
      <svg class="tri" viewBox="0 0 17 17"><rect x="6" y="1" width="10" height="8" fill="#5a78c0" stroke="#223"/><rect x="1" y="7" width="10" height="8" fill="#5a78c0" stroke="#223"/><path d="M4 16H12" stroke="#223"/></svg>
      <svg class="tri" viewBox="0 0 17 17"><rect x="0" y="0" width="8" height="17" fill="#c81820"/><rect x="8" y="0" width="9" height="17" fill="#f8e020"/><text x="1" y="13" font-family="Liberation Sans,sans-serif" font-weight="700" font-size="11" fill="#000">Z</text><text x="8" y="13" font-family="Liberation Sans,sans-serif" font-weight="700" font-size="11" fill="#c81820">A</text></svg>
      <svg class="tri" viewBox="0 0 17 17"><path d="M1 10A7.500 7.500 0 0 1 16 10Z" fill="#2a6ab0" stroke="#123"/><text x="1" y="16" font-family="Liberation Sans,sans-serif" font-weight="700" font-size="7.500" fill="#c06010">cfos</text></svg>
      <svg class="tri" viewBox="0 0 17 17"><circle cx="8.500" cy="9" r="6.500" fill="#fff" stroke="#bbb"/><circle cx="3" cy="3" r="2.500" fill="#111"/><circle cx="14" cy="3" r="2.500" fill="#111"/><ellipse cx="6" cy="8" rx="1.500" ry="2" fill="#111"/><ellipse cx="11" cy="8" rx="1.500" ry="2" fill="#111"/><path d="M7.500 12.500h2" stroke="#d03020" stroke-width="1.500"/></svg>
      <svg class="tri" viewBox="0 0 17 17"><rect x="1" y="4" width="15" height="10" fill="#f8f020" stroke="#444"/><path d="M1 4 8.500 10 16 4M1 14 6 8M16 14 11 8" fill="none" stroke="#444"/></svg>
      <svg class="tri" viewBox="0 0 17 17"><rect x="3" y="2" width="12" height="13" fill="#5070b8" stroke="#123"/><rect x="6" y="2" width="6" height="4" fill="#e8e8f4"/><rect x="6" y="9" width="6" height="6" fill="#123"/></svg>
      <svg class="tri" viewBox="0 0 17 17"><path d="M1 14 7 2H13L16 14H12L11 10H7L5 14Z" fill="#d01818"/><text x="5" y="13" font-family="Liberation Sans,sans-serif" font-weight="700" font-size="9" fill="#fff">AI</text></svg>
      <svg class="tri" viewBox="0 0 17 17"><circle cx="7" cy="8" r="6" fill="#8a8a8a" stroke="#333"/><circle cx="7" cy="8" r="2.500" fill="#ddd" stroke="#444"/><path d="M13 5C15 8 15 12 12 15" stroke="#5a70c0" fill="none" stroke-width="1.300"/></svg>
      <svg class="tri" viewBox="0 0 17 17"><path d="M2 12 11 2 16 5 7 15Z" fill="#fff" stroke="#111" stroke-width="1.200"/><path d="M6 8l4 3M9 5l4 3" stroke="#111"/><circle cx="3" cy="14" r="1.600" fill="#d02020"/></svg>
      <span class="clock">21:16</span>
    </div>
  </div>
</div>
<script>
(function(){
  var g=document.getElementById('grid'),NS='http://www.w3.org/2000/svg';
  function add(d,major){var p=document.createElementNS(NS,'path');p.setAttribute('d',d);p.setAttribute('stroke','#3c6a52');
    p.setAttribute('stroke-width',major?'1.100':'.9');if(!major){p.setAttribute('stroke-dasharray','2.500 2');p.setAttribute('stroke-opacity','.8');}g.appendChild(p);}
  var i,k,c,x;
  for(i=-9;i<=37;i++){c=350+18.1*i;add('M-5 '+(c+5*.146)+'L1300 '+(c-1300*.146),((i%10)+10)%10===0);}
  for(k=-20;k<=40;k++){x=176+34.67*k;add('M'+(x+.095*620)+' 0L'+(x-.095*(1000-620))+' 1000',((k%10)+10)%10===0);}
})();
</script>
</body>
</html>
